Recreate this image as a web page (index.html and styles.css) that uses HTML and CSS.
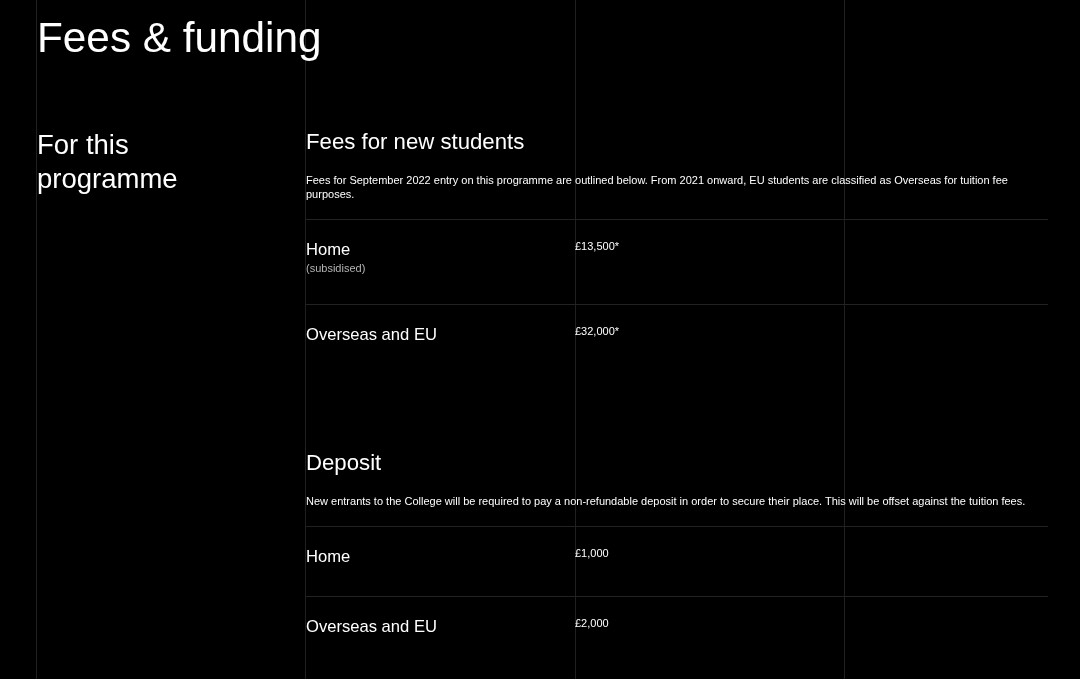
FILE: index.html
```html
<!DOCTYPE html>
<html lang="en">
<head>
<meta charset="utf-8">
<title>Fees &amp; funding</title>
<link rel="stylesheet" href="styles.css">
</head>
<body>
<div class="grid-lines" aria-hidden="true">
  <span></span><span></span><span></span><span></span>
</div>
<main class="page">
  <h1 class="title">Fees &amp; funding</h1>
  <section class="section">
    <h2 class="side-title">For this<br>programme</h2>
    <div class="content">
      <div class="block">
        <h3 class="block-title">Fees for new students</h3>
        <p class="block-text">Fees for September 2022 entry on this programme are outlined below. From 2021 onward, EU students are classified as Overseas for tuition fee purposes.</p>
        <div class="row">
          <div class="label">Home<span class="note">(subsidised)</span></div>
          <div class="price">£13,500*</div>
        </div>
        <div class="row">
          <div class="label">Overseas and EU</div>
          <div class="price">£32,000*</div>
        </div>
      </div>
      <div class="block block-next">
        <h3 class="block-title">Deposit</h3>
        <p class="block-text">New entrants to the College will be required to pay a non-refundable deposit in order to secure their place. This will be offset against the tuition fees.</p>
        <div class="row">
          <div class="label">Home</div>
          <div class="price">£1,000</div>
        </div>
        <div class="row">
          <div class="label">Overseas and EU</div>
          <div class="price">£2,000</div>
        </div>
      </div>
    </div>
  </section>
</main>
</body>
</html>
```
FILE: styles.css
```css
html {
  background: #000;
}

body {
  margin: 0;
  padding: 0;
  color: #fff;
  font-family: "Liberation Sans", Arial, sans-serif;
}

.grid-lines {
  position: fixed;
  top: 0;
  bottom: 0;
  left: 36px;
  width: 1077px;
  display: grid;
  grid-template-columns: repeat(4, 1fr);
  z-index: -1;
  pointer-events: none;
}

.grid-lines span {
  border-left: 1px solid #202020;
}

.page {
  padding: 14px 32px 0 37px;
}

.title {
  margin: 0;
  font-size: 42.3px;
  line-height: 48px;
  font-weight: 400;
}

.section {
  display: grid;
  grid-template-columns: 269px 1fr;
  margin-top: 66px;
}

.side-title {
  margin: 0;
  font-size: 27.5px;
  line-height: 34px;
  font-weight: 400;
}

.block-title {
  margin: 0 0 18px;
  padding-top: 1px;
  font-size: 22.2px;
  line-height: 26px;
  font-weight: 400;
}

.block-text {
  margin: 0 0 18px;
  font-size: 11px;
  line-height: 14px;
}

.block-next {
  margin-top: 75px;
}

.row {
  display: grid;
  grid-template-columns: 269px 1fr;
  border-top: 1px solid #222;
  padding: 21px 0 30px;
}

.label {
  font-size: 16.6px;
  line-height: 18px;
}

.note {
  display: block;
  margin-top: 3px;
  font-size: 11px;
  line-height: 12px;
  color: #b4b4b4;
}

.price {
  font-size: 11px;
  line-height: 13px;
  margin-top: -1px;
}
```
